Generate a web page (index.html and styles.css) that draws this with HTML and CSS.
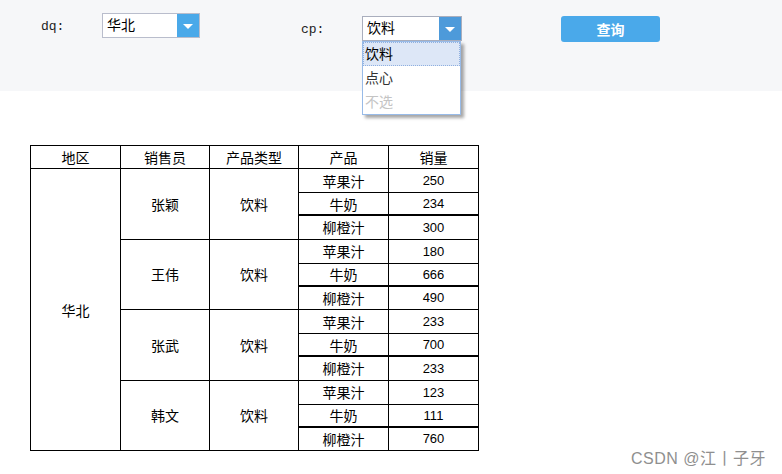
FILE: index.html
```html
<!DOCTYPE html>
<html lang="zh">
<head>
<meta charset="utf-8">
<title>销量查询</title>
<link rel="stylesheet" href="styles.css">
</head>
<body>
<div class="panel">
  <span class="label label-dq">dq:</span>
  <div class="select select-dq">
    <span class="select-text">华北</span>
    <span class="select-btn"><span class="tri"></span></span>
  </div>
  <span class="label label-cp">cp:</span>
  <div class="select select-cp">
    <span class="select-text">饮料</span>
    <span class="select-btn focus"><span class="tri"></span></span>
    <ul class="dropdown">
      <li class="opt active">饮料</li>
      <li class="opt">点心</li>
      <li class="opt muted">不选</li>
    </ul>
  </div>
  <button class="query">查询</button>
</div>

<div class="main">
  <table class="report">
    <colgroup><col class="c1"><col class="c2"><col class="c3"><col class="c4"><col class="c5"></colgroup>
    <thead>
      <tr class="hrow"><th>地区</th><th>销售员</th><th>产品类型</th><th>产品</th><th>销量</th></tr>
    </thead>
    <tbody>
      <tr class="r1"><td rowspan="12">华北</td><td rowspan="3">张颖</td><td rowspan="3">饮料</td><td>苹果汁</td><td>250</td></tr>
      <tr class="r2"><td class="thick">牛奶</td><td class="thick">234</td></tr>
      <tr class="r3"><td>柳橙汁</td><td>300</td></tr>
      <tr class="r1"><td rowspan="3">王伟</td><td rowspan="3">饮料</td><td>苹果汁</td><td>180</td></tr>
      <tr class="r2"><td class="thick">牛奶</td><td class="thick">666</td></tr>
      <tr class="r3"><td>柳橙汁</td><td>490</td></tr>
      <tr class="r1"><td rowspan="3">张武</td><td rowspan="3">饮料</td><td>苹果汁</td><td>233</td></tr>
      <tr class="r2"><td class="thick">牛奶</td><td class="thick">700</td></tr>
      <tr class="r3"><td>柳橙汁</td><td>233</td></tr>
      <tr class="r1"><td rowspan="3">韩文</td><td rowspan="3">饮料</td><td>苹果汁</td><td>123</td></tr>
      <tr class="r2"><td class="thick">牛奶</td><td class="thick">111</td></tr>
      <tr class="r3"><td>柳橙汁</td><td>760</td></tr>
    </tbody>
  </table>
</div>

<div class="watermark">CSDN @江丨子牙</div>
</body>
</html>
```

FILE: styles.css
```css
html, body {
  margin: 0;
  padding: 0;
  background: #ffffff;
  font-family: "Liberation Sans", "Noto Sans CJK SC", sans-serif;
  color: #000;
  width: 782px;
  height: 474px;
  overflow: hidden;
  position: relative;
}

.panel {
  height: 91px;
  background: #f6f7f9;
  display: flex;
  align-items: flex-start;
  box-sizing: border-box;
}

.label {
  font-family: "Liberation Mono", "Noto Sans CJK SC", monospace;
  font-size: 13px;
  color: #222;
}
.label-dq { margin: 19px 0 0 41px; width: 61px; }
.label-cp { margin: 22px 0 0 101px; width: 61px; }

.select {
  position: relative;
  display: flex;
  height: 25px;
  box-sizing: border-box;
  border: 1px solid #b9bdcc;
  background: #fff;
}
.select-dq { width: 98px; margin-top: 13px; }
.select-cp { width: 100px; margin-top: 16px; border-color: #a9aebd; }

.select-text {
  flex: 1;
  font-size: 14px;
  line-height: 23px;
  padding-left: 4px;
  color: #000;
}
.select-btn {
  width: 22px;
  background: #4aa9e9;
  display: flex;
  align-items: center;
  justify-content: center;
}
.select-btn.focus { background: #4d9ada; }
.tri {
  width: 0;
  height: 0;
  border-left: 5px solid transparent;
  border-right: 5px solid transparent;
  border-top: 5px solid #fff;
  margin-top: 1px;
}

.dropdown {
  position: absolute;
  left: -1px;
  top: 24px;
  width: 99px;
  box-sizing: border-box;
  margin: 0;
  padding: 0;
  list-style: none;
  background: #fff;
  border: 1px solid #98bbe8;
  box-shadow: 3px 3px 3px rgba(0, 0, 0, 0.35);
  z-index: 5;
}
.opt {
  height: 24px;
  line-height: 24px;
  font-size: 14px;
  padding-left: 2px;
  color: #333;
  box-sizing: border-box;
}
.opt.active {
  background: #dde7f7;
  color: #000;
  border: 1px dotted #8fb0e0;
  line-height: 22px;
  padding-left: 1px;
}
.opt.muted { color: #c4c4c4; }

.query {
  margin: 16px 0 0 99px;
  width: 99px;
  height: 26px;
  border: none;
  border-radius: 3px;
  background: #4aa9ea;
  color: #fff;
  font-family: "Liberation Sans", "Noto Sans CJK SC", sans-serif;
  font-size: 14px;
  font-weight: bold;
  padding: 0;
}

.main {
  padding: 54px 0 0 30px;
}

.report {
  border-collapse: collapse;
  table-layout: fixed;
  width: 448px;
  font-size: 13px;
}
.report col.c1 { width: 90px; }
.report col.c2 { width: 89px; }
.report col.c3 { width: 89px; }
.report col.c4 { width: 90px; }
.report col.c5 { width: 90px; }

.report th, .report td {
  border: 1px solid #000;
  padding: 0;
  text-align: center;
  vertical-align: middle;
  font-weight: normal;
  font-size: 14px;
}
.report td:last-child { font-size: 13px; }
.report .hrow { height: 23px; }
.report .r1 { height: 24px; }
.report .r2 { height: 22.5px; }
.report .r3 { height: 24px; }
.report td.thick { border-bottom: 2px solid #000; }

.watermark {
  position: absolute;
  left: 631px;
  top: 445px;
  font-size: 16px;
  letter-spacing: 0.5px;
  color: #8f8f8f;
  font-family: "Liberation Sans", "Noto Sans CJK SC", sans-serif;
}
```
